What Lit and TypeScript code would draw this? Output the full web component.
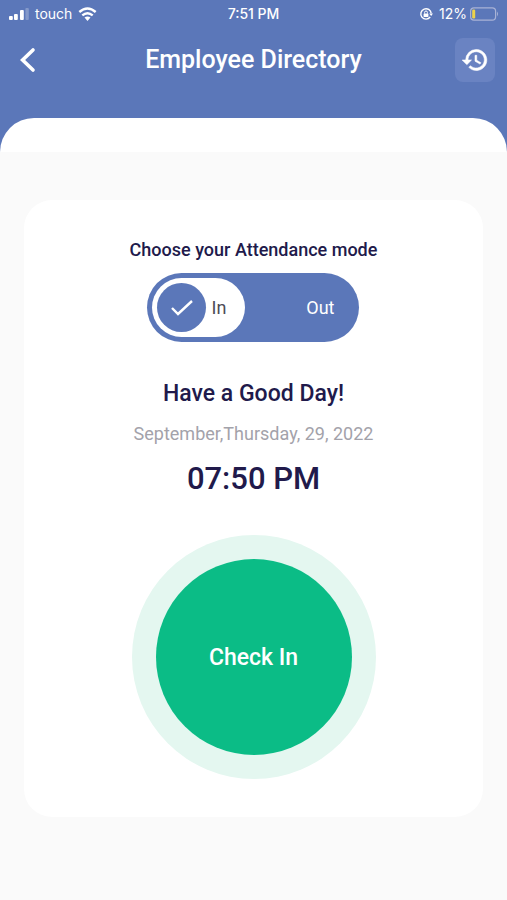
import { LitElement, html, css, svg } from "lit";
import { customElement, state } from "lit/decorators.js";
import { classMap } from "lit/directives/class-map.js";

type Mode = "In" | "Out";

const check = svg`<path d="M2 9 L8 15 L22 2" fill="none" stroke="currentColor" stroke-width="2.4"/>`;

@customElement("status-bar")
export class StatusBar extends LitElement {
  static styles = css`
    :host {
      display: grid;
      grid-template-columns: 1fr auto 1fr;
      align-items: center;
      height: 28px;
      padding: 0 8px;
      font-family: Inter, "Open Sans", sans-serif;
      font-size: 14px;
      line-height: 20px;
    }
    .side {
      display: flex;
      align-items: center;
      gap: 6px;
    }
    .end {
      justify-content: flex-end;
    }
    .power {
      display: flex;
      align-items: center;
      gap: 3px;
    }
    .time {
      font-weight: 500;
    }
    svg {
      display: block;
    }
  `;

  render() {
    return html`
      <div class="side">
        <svg width="21" height="12" viewBox="0 0 21 12" fill="currentColor" aria-hidden="true">
          <rect x="1" y="8" width="3.8" height="4" rx="1" />
          <rect x="6" y="6" width="3.8" height="6" rx="1" />
          <rect x="12" y="2" width="3.8" height="10" rx="1" />
          <rect x="17.4" y="0" width="3.4" height="12" rx="1" opacity="0.25" />
        </svg>
        <span>touch</span>
        <svg width="19" height="14" viewBox="0 0 18 14" fill="none" stroke="currentColor" stroke-width="2.4" aria-hidden="true">
          <path d="M0.8 5 Q9 -2 17.2 5" />
          <path d="M3.8 8.4 Q9 4 14.2 8.4" />
          <path d="M6 10.6 Q9 8.2 12 10.6 L9 14 Z" fill="currentColor" stroke="none" />
        </svg>
      </div>
      <div class="time">7:51 PM</div>
      <div class="side end">
        <svg width="14" height="14" viewBox="0 0 14 14" fill="none" stroke="currentColor" aria-hidden="true">
          <path d="M11.2 10 A5.2 5.2 0 1 1 12.2 6.4" stroke-width="1.4" />
          <path d="M10.2 6.4 H14 L12.2 9 Z" fill="currentColor" stroke="none" />
          <rect x="4.6" y="6.4" width="4.8" height="3.6" rx="0.6" fill="currentColor" stroke="none" />
          <path d="M5.6 6.6 V5.4 a1.4 1.4 0 0 1 2.8 0 V6.6" />
        </svg>
        <div class="power">
          <span>12%</span>
          <svg width="29" height="14" viewBox="0 0 29 14" aria-hidden="true">
            <rect x="0.6" y="0.8" width="25" height="12.4" rx="3.4" fill="none" stroke="#a9b3d6" stroke-width="1.2" />
            <rect x="2.2" y="2.6" width="3" height="8.8" rx="1.2" fill="#ecd24a" />
            <path d="M27 4.6 q2 2.4 0 4.8 z" fill="#a9b3d6" />
          </svg>
        </div>
      </div>
    `;
  }
}

@customElement("app-root")
export class AppRoot extends LitElement {
  @state() private mode: Mode = "In";

  static styles = css`
    :host {
      display: flex;
      flex-direction: column;
      min-height: 100vh;
      background: #fafafa;
      color: #211a4b;
      font-family: Roboto, "Open Sans", sans-serif;
    }
    * {
      box-sizing: border-box;
    }
    svg {
      display: block;
    }
    button {
      padding: 0;
      border: 0;
      background: none;
      color: #fff;
      font: inherit;
      cursor: pointer;
    }
    .header {
      background: #5b77b9;
      color: #fff;
    }
    .nav {
      display: grid;
      grid-template-columns: 44px 1fr 44px;
      align-items: center;
      height: 64px;
      padding: 0 12px;
    }
    .back {
      display: grid;
      align-items: center;
      height: 44px;
      padding-left: 6px;
    }
    .history {
      display: grid;
      place-items: center;
      justify-self: end;
      width: 40px;
      height: 44px;
      border-radius: 8px;
      background: #6a83c2;
    }
    h1,
    h2,
    p {
      margin: 0;
      text-align: center;
    }
    h1 {
      font-size: 25px;
      line-height: 32px;
      font-weight: 500;
    }
    .sheet {
      height: 34px;
      margin-top: 26px;
      border-radius: 34px 34px 0 0;
      background: #fff;
    }
    .card {
      display: flex;
      flex-direction: column;
      align-items: center;
      margin: 48px 24px;
      padding: 38px 16px;
      border-radius: 28px;
      background: #fff;
    }
    .modes {
      margin: 0;
      padding: 0;
      border: 0;
      min-width: 0;
    }
    legend {
      padding: 0 0 11px;
      font-size: 18px;
      line-height: 24px;
      font-weight: 500;
    }
    .toggle {
      display: flex;
      justify-content: space-between;
      width: 212px;
      height: 69px;
      margin: 0 auto;
      padding: 5px;
      border-radius: 35px;
      background: #5b77b9;
    }
    .option {
      display: grid;
      grid-template-columns: 49px auto;
      align-items: center;
      justify-content: start;
      column-gap: 5px;
      width: 93px;
      padding: 5px;
      border-radius: 30px;
      color: #fff;
      font-size: 18px;
      line-height: 24px;
      cursor: pointer;
    }
    .option.on {
      background: #fff;
      color: #4c4c55;
    }
    .option.last:not(.on) {
      grid-template-columns: 1fr auto;
      padding-right: 20px;
    }
    .option input {
      grid-area: 1 / 1;
      appearance: none;
      width: 100%;
      height: 49px;
      margin: 0;
      border-radius: 50%;
      cursor: pointer;
    }
    .option.on input {
      background: #5b77b9;
    }
    .tick {
      grid-area: 1 / 1;
      justify-self: center;
      color: #fff;
      pointer-events: none;
    }
    .text {
      grid-area: 1 / 2;
    }
    h2 {
      margin-top: 36px;
      font-size: 23px;
      line-height: 32px;
      font-weight: 500;
    }
    .date {
      margin-top: 12px;
      color: #a3a2aa;
      font-size: 18px;
      line-height: 24px;
    }
    .clock {
      margin-top: 13px;
      font-size: 31px;
      line-height: 40px;
      font-weight: 500;
    }
    .ring {
      margin-top: 36px;
      padding: 24px;
      border-radius: 50%;
      background: #e4f7f0;
    }
    .check {
      display: block;
      width: 196px;
      height: 196px;
      border-radius: 50%;
      background: #0bbc86;
      font-size: 23px;
      font-weight: 500;
    }
  `;

  private option(mode: Mode) {
    const on = this.mode === mode;
    return html`
      <label class=${classMap({ option: true, on, last: mode === "Out" })}>
        <input
          type="radio"
          name="mode"
          .value=${mode}
          .checked=${on}
          @change=${() => (this.mode = mode)}
        />
        ${on
          ? html`<svg class="tick" width="24" height="18" viewBox="0 0 24 18" aria-hidden="true">${check}</svg>`
          : null}
        <span class="text">${mode}</span>
      </label>
    `;
  }

  render() {
    return html`
      <header class="header">
        <status-bar></status-bar>
        <div class="nav">
          <button class="back" aria-label="Back">
            <svg width="20" height="26" viewBox="0 0 20 26" fill="none" stroke="currentColor" stroke-width="3.6" stroke-linecap="round" aria-hidden="true">
              <path d="M15 3 L4.6 13 L15 23" />
            </svg>
          </button>
          <h1>Employee Directory</h1>
          <button class="history" aria-label="History">
            <svg width="28" height="28" viewBox="0 0 24 24" fill="currentColor" stroke="currentColor" stroke-width="0.5" aria-hidden="true">
              <path d="M13 3a9 9 0 0 0-9 9H1l3.9 3.9.1.1L9 12H6a7 7 0 1 1 2.1 4.9l-1.4 1.4A9 9 0 1 0 13 3zm-1 5v5l4.3 2.5.7-1.2-3.5-2.1V8H12z" />
            </svg>
          </button>
        </div>
        <div class="sheet"></div>
      </header>
      <main class="card">
        <fieldset class="modes">
          <legend>Choose your Attendance mode</legend>
          <div class="toggle">${this.option("In")}${this.option("Out")}</div>
        </fieldset>
        <h2>Have a Good Day!</h2>
        <p class="date">September,Thursday, 29, 2022</p>
        <p class="clock">07:50 PM</p>
        <div class="ring">
          <button class="check">Check ${this.mode}</button>
        </div>
      </main>
    `;
  }
}
